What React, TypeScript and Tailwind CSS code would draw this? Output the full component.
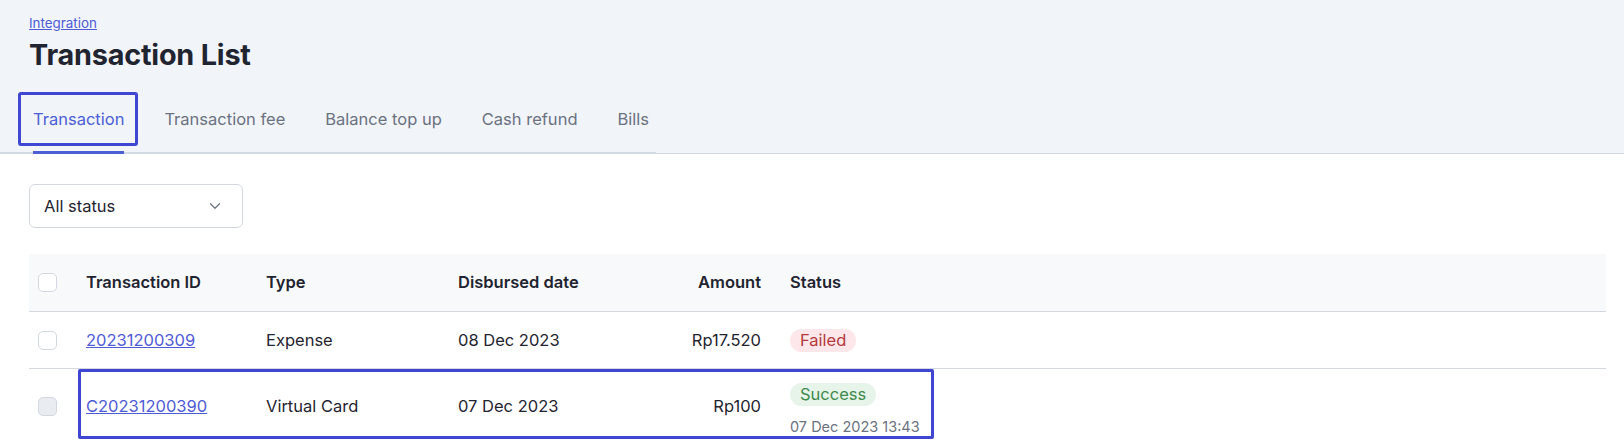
import { ChevronDown } from "lucide-react";

const tabs = ["Transaction", "Transaction fee", "Balance top up", "Cash refund", "Bills"];

function Checkbox({ disabled }: { disabled?: boolean }) {
  return (
    <span
      className={
        disabled
          ? "block w-[19px] h-[19px] rounded-[5px] border border-[#d3d8df] bg-[#e9ecf0]"
          : "block w-[19px] h-[19px] rounded-[5px] border border-[#d3d8df] bg-white"
      }
    />
  );
}

export default function App() {
  return (
    <div className="min-h-[444px] bg-white text-[#1f2430] font-['Inter','Noto_Sans',sans-serif]">
      <header className="relative bg-[#f1f4f9] border-b border-[#d3d9e2]">
        <div className="px-[29px] pt-[15px]">
          <a href="#" className="block text-[13.4px] leading-4 text-[#4f5bd5] underline">
            Integration
          </a>
          <h1 className="mt-[6px] text-[28.8px] leading-[36px] font-bold tracking-[-0.2px]">Transaction List</h1>
        </div>
        <nav className="mt-[22px] -mb-px inline-flex gap-10 pl-[33px] pr-[7px] border-b-2 border-[#d3d9e2]">
          {tabs.map((t, i) => (
            <button
              key={t}
              className={
                i === 0
                  ? "-mb-0.5 pt-3 pb-[20px] text-[16.5px] leading-6 text-[#4c5fd5] border-b-[3px] border-[#4c5fd5]"
                  : "-mb-0.5 pt-3 pb-[20px] text-[16.5px] leading-6 text-[#6b7280] border-b-[3px] border-transparent"
              }
            >
              {t}
            </button>
          ))}
        </nav>
        <div className="absolute left-[18px] top-[92px] w-[120px] h-[54px] rounded-[3px] border-[3px] border-[#3f46d1]" />
      </header>

      <div className="px-[29px] pt-[30px]">
        <button className="flex items-center justify-between w-[214px] h-[44px] px-[14px] rounded-[6px] border border-[#d3d8df] bg-white text-[16.5px] text-[#1f2430]">
          <span>All status</span>
          <ChevronDown size={18} strokeWidth={1.6} className="text-[#6b7280] mr-[4px]" />
        </button>
      </div>

      <div className="ml-[29px] mr-[18px] mt-[26px] text-[16.5px]">
        <div className="flex items-center h-[58px] bg-[#f8f9fb] border-b border-[#d3d8df] font-semibold">
          <div className="w-[57px] shrink-0 pl-[9px]">
            <Checkbox />
          </div>
          <div className="w-[180px] shrink-0">Transaction ID</div>
          <div className="w-[192px] shrink-0">Type</div>
          <div className="w-[303px] shrink-0">Disbursed date</div>
          <div className="w-0 shrink-0 flex justify-end whitespace-nowrap">Amount</div>
          <div className="flex-1 pl-[29px]">Status</div>
        </div>

        <div className="flex items-center h-[57px] border-b border-[#d3d8df]">
          <div className="w-[57px] shrink-0 pl-[9px]">
            <Checkbox />
          </div>
          <div className="w-[180px] shrink-0">
            <a href="#" className="text-[#4f5bd5] underline">20231200309</a>
          </div>
          <div className="w-[192px] shrink-0">Expense</div>
          <div className="w-[303px] shrink-0">08 Dec 2023</div>
          <div className="w-0 shrink-0 flex justify-end whitespace-nowrap">Rp17.520</div>
          <div className="flex-1 pl-[29px]">
            <span className="inline-block px-[10px] rounded-full bg-[#fde7ea] text-[#b4383d] leading-[23px]">Failed</span>
          </div>
        </div>

        <div className="relative flex items-center">
          <div className="w-[57px] shrink-0 pl-[9px]">
            <Checkbox disabled />
          </div>
          <div className="w-[180px] shrink-0">
            <a href="#" className="text-[#4f5bd5] underline">C20231200390</a>
          </div>
          <div className="w-[192px] shrink-0">Virtual Card</div>
          <div className="w-[303px] shrink-0">07 Dec 2023</div>
          <div className="w-0 shrink-0 flex justify-end whitespace-nowrap">Rp100</div>
          <div className="flex-1 pl-[29px] pt-[14px] pb-[8px] flex flex-col items-start">
            <span className="inline-block px-[10px] rounded-full bg-[#e6f4e9] text-[#3f8a4d] leading-[23px]">Success</span>
            <span className="mt-[12px] text-[14.5px] leading-[18px] text-[#6b7280]">07 Dec 2023 13:43</span>
          </div>
          <div className="absolute left-[49px] top-0 w-[856px] h-[70px] rounded-[2px] border-[3px] border-[#3f46d1]" />
        </div>
      </div>
    </div>
  );
}
